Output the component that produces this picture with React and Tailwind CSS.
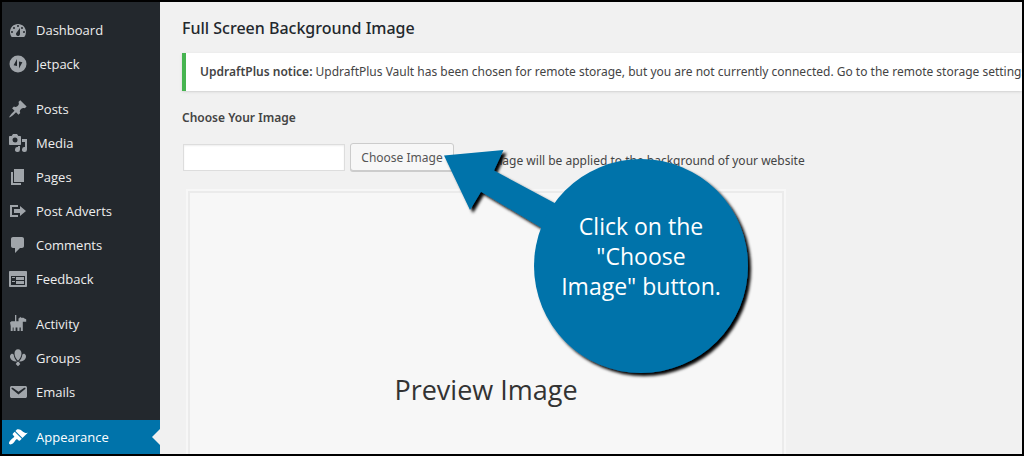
import { useState } from "react";

// sidebar icons, all drawn on a 20x20 grid
const icons = {
  dashboard:
    "M3.76 17h12.48A8 8 0 0 0 18 12c0-4.42-3.58-8-8-8s-8 3.58-8 8c0 1.89.66 3.63 1.76 5zM10 5a1 1 0 1 1 0 2 1 1 0 0 1 0-2zM6 7a1 1 0 1 1 0 2 1 1 0 0 1 0-2zm8 0a1 1 0 1 1 0 2 1 1 0 0 1 0-2zm-5.37 5.55L12 8v6a2 2 0 1 1-3.37-1.45zM4 11a1 1 0 1 1 0 2 1 1 0 0 1 0-2zm12 0a1 1 0 1 1 0 2 1 1 0 0 1 0-2z",
  jetpack:
    "M10 1.5a8.5 8.5 0 1 0 0 17 8.5 8.5 0 0 0 0-17zM9 5v7l-3.4-.8zM11 14.5V7.5l3.4.8z",
  posts:
    "M10.44 3.02l1.82-1.82 6.36 6.35-1.83 1.82c-1.05-.68-2.48-.57-3.41.36l-.75.75c-.92.93-1.04 2.35-.35 3.41l-1.83 1.82-2.41-2.41-2.8 2.79c-.42.42-3.38 2.71-3.8 2.29s1.86-3.39 2.28-3.81l2.79-2.79L4.1 9.36l1.83-1.82c1.05.69 2.48.57 3.4-.36l.75-.75c.93-.92 1.05-2.35.36-3.41z",
  media:
    "M13 11V4c0-.55-.45-1-1-1h-1.67L9 1H5L3.67 3H2c-.55 0-1 .45-1 1v7c0 .55.45 1 1 1h10c.55 0 1-.45 1-1zM7 4.5a2.5 2.5 0 1 1 0 5 2.5 2.5 0 0 1 0-5zM14 6h5v10.5a2.5 2.5 0 1 1-2-2.45V9h-3V6zm-4 8.05V13h2v3.5a2.5 2.5 0 1 1-2-2.45z",
  pages: "M6 15V2h10v13H6zm-1 1h8v2H3V5h2v11z",
  adverts: "M4 6h6V4H2v12h8v-2H4V6zm2 2h6V5l6 5-6 5v-3H6V8z",
  comments:
    "M5 2h9c1.1 0 2 .9 2 2v7c0 1.1-.9 2-2 2h-2l-5 5v-5H5c-1.1 0-2-.9-2-2V4c0-1.1.9-2 2-2z",
  feedback:
    "M2 2h16c.55 0 1 .45 1 1v14c0 .55-.45 1-1 1H2c-.55 0-1-.45-1-1V3c0-.55.45-1 1-1zm15 14V7H3v9h14zM4 8v1h3V8H4zm4 0v3h8V8H8zm-4 4v1h3v-1H4zm4 0v3h8v-3H8z",
  activity:
    "M7 1h1.3v6.2h2.2V4.5l1-.5.6-1.2 1 1h2.4l1 .7 1.7.7v2.6h-3.4V17h-2v-3.5h-1.3V17H9.4v-3.5H7.6V17h-2v-3.5H4.7V17h-2v-5L2 8.5l1.5-1.2H7z",
  groups:
    "M10 1.2c2.2 0 3.5 1.8 3.5 4.2 0 2.5-1.6 5.5-3.5 7.4-1.9-1.9-3.5-4.9-3.5-7.4 0-2.4 1.3-4.2 3.5-4.2zM3 6.2c1-.7 2.2-.5 2.7.5.4 2.6 1.6 5 3.3 6.7-3.2.4-5.7-.9-6.7-3.4-.6-1.6-.3-3 .7-3.8zM17 6.2c-1-.7-2.2-.5-2.7.5-.4 2.6-1.6 5-3.3 6.7 3.2.4 5.7-.9 6.7-3.4.6-1.6.3-3-.7-3.8zM9.3 13.8h1.4l1.6 2.2L10 18.2 7.7 16z",
  emails:
    "M3.87 4h13.25C18.37 4 19 4.59 19 5.79v8.42c0 1.19-.63 1.79-1.88 1.79H3.87c-1.25 0-1.88-.6-1.88-1.79V5.79c0-1.2.63-1.79 1.88-1.79zm6.62 8.6l6.74-5.53c.24-.2.43-.66.13-1.07-.29-.41-.82-.42-1.17-.17l-5.7 3.86L4.8 5.83c-.35-.25-.88-.24-1.17.17-.3.41-.11.87.13 1.07z",
  appearance:
    "M14.48 11.06L7.41 3.99l1.5-1.5c.5-.56 2.3-.47 3.51.32 1.21.8 1.43 1.28 2.91 2.1 1.18.64 2.45 1.26 4.45.85zm-.71.71L6.7 4.7 4.93 6.47c-.39.39-.39 1.02 0 1.41l1.06 1.06c.39.39.39 1.03 0 1.42-.6.6-1.43 1.11-2.21 1.69-.35.26-.7.53-1.01.84C1.43 14.23.4 16.08 1.4 17.07c.99 1 2.84-.03 4.18-1.36.31-.31.58-.66.85-1.02.57-.78 1.08-1.61 1.69-2.21.39-.39 1.02-.39 1.41 0l1.06 1.06c.39.39 1.02.39 1.41 0z",
};

const menuGroups = [
  [
    { label: "Dashboard", icon: "dashboard" },
    { label: "Jetpack", icon: "jetpack" },
  ],
  [
    { label: "Posts", icon: "posts" },
    { label: "Media", icon: "media" },
    { label: "Pages", icon: "pages" },
    { label: "Post Adverts", icon: "adverts" },
    { label: "Comments", icon: "comments" },
    { label: "Feedback", icon: "feedback" },
  ],
  [
    { label: "Activity", icon: "activity" },
    { label: "Groups", icon: "groups" },
    { label: "Emails", icon: "emails" },
  ],
  [{ label: "Appearance", icon: "appearance", active: true }],
];

const MenuItem = ({ label, icon, active }) => (
  <li>
    <a
      href="#"
      className={
        active
          ? "relative flex items-center h-[34px] pl-1.5 gap-2 bg-[#0073aa] text-white"
          : "flex items-center h-[34px] pl-1.5 gap-2 text-[#eee]"
      }
    >
      <svg
        viewBox="0 0 20 20"
        fillRule="evenodd"
        className={active ? "w-5 h-5 fill-white" : "w-5 h-5 fill-[#a0a5aa]"}
      >
        <path d={icons[icon]} />
      </svg>
      <span className="pt-0.5">{label}</span>
      {active && (
        <span className="absolute right-0 top-[9px] border-8 border-transparent border-r-[#f1f1f1]" />
      )}
    </a>
  </li>
);

const Sidebar = () => (
  <nav className="w-[158px] shrink-0 bg-[#23282d] pt-[11px] text-[13px] font-['Open_Sans',sans-serif]">
    <div className="flex flex-col gap-[11px]">
      {menuGroups.map((group, i) => (
        <ul key={i}>
          {group.map((item) => (
            <MenuItem key={item.label} {...item} />
          ))}
        </ul>
      ))}
    </div>
  </nav>
);

// Blue bubble with an arrow pointing at the button
const Callout = () => (
  <div className="absolute left-[252px] -top-12 w-[330px] h-[240px] font-['Open_Sans',sans-serif]">
    <svg viewBox="440 143 330 240" className="absolute inset-0 w-full h-full">
      <defs>
        <filter id="shadow" x="-10%" y="-10%" width="120%" height="120%">
          <feDropShadow dx="3" dy="3" stdDeviation="1.8" floodColor="#000" floodOpacity="1" />
        </filter>
      </defs>
      <g filter="url(#shadow)" fill="#0073aa">
        <path d="M444 155.500L503.500 150L494 170.500L562 207L546 230.500L481 191.700L470 210z" />
        <circle cx="641" cy="266" r="107" />
      </g>
    </svg>
    <p className="relative ml-[93px] w-[216px] pt-[68px] text-center text-[23px] leading-[30px] text-white">
      Click on the
      <br />
      "Choose
      <br />
      Image" button.
    </p>
  </div>
);

const App = () => {
  const [image, setImage] = useState("");

  return (
    <div className="flex min-h-screen border-2 border-black bg-[#f1f1f1] font-['Noto_Sans','Open_Sans',sans-serif] text-[#444]">
      <Sidebar />

      <main className="flex flex-col flex-1 min-w-0 overflow-hidden pl-[22px] pt-3.5 text-[12px]">
        <h1 className="text-[16px] leading-6 font-medium text-[#23282d]">
          Full Screen Background Image
        </h1>

        <div className="mt-[13px] h-[38px] flex items-center border-l-4 border-[#46b450] bg-white pl-3.5 shadow-sm whitespace-nowrap">
          <p>
            <strong className="font-semibold">UpdraftPlus notice:</strong>{" "}
            UpdraftPlus Vault has been chosen for remote storage, but you are
            not currently connected. Go to the remote storage settings
          </p>
        </div>

        <label htmlFor="image" className="mt-[17px] leading-5 font-semibold">
          Choose Your Image
        </label>

        <div className="mt-[15px] flex items-start pl-px whitespace-nowrap">
          <input
            id="image"
            type="text"
            value={image}
            onChange={(e) => setImage(e.target.value)}
            className="mt-px w-[162px] h-[27px] border border-[#ddd] bg-white px-1 shadow-[inset_0_1px_2px_rgba(0,0,0,0.07)]"
          />
          <button
            type="button"
            className="ml-[5px] w-[104px] h-[28px] pt-0.5 rounded-[3px] border border-[#ccc] bg-[#f7f7f7] text-[#555] shadow-[0_1px_0_#ccc]"
          >
            Choose Image
          </button>
          <span className="pt-2 pl-2 leading-5">
            This image will be applied to the background of your website
          </span>
        </div>

        <section className="relative flex flex-col flex-1 mt-[18px] ml-1 w-full max-w-[600px] border-2 border-b-0 border-[#f7f7f7]">
          <div className="flex-1 border-2 border-b-0 border-[#ebebeb] bg-[#f7f7f7] pt-[177px] text-center font-['Open_Sans',sans-serif]">
            <h2 className="text-[27px] leading-10 text-[#333]">Preview Image</h2>
          </div>
          <Callout />
        </section>
      </main>
    </div>
  );
};

export default App;
